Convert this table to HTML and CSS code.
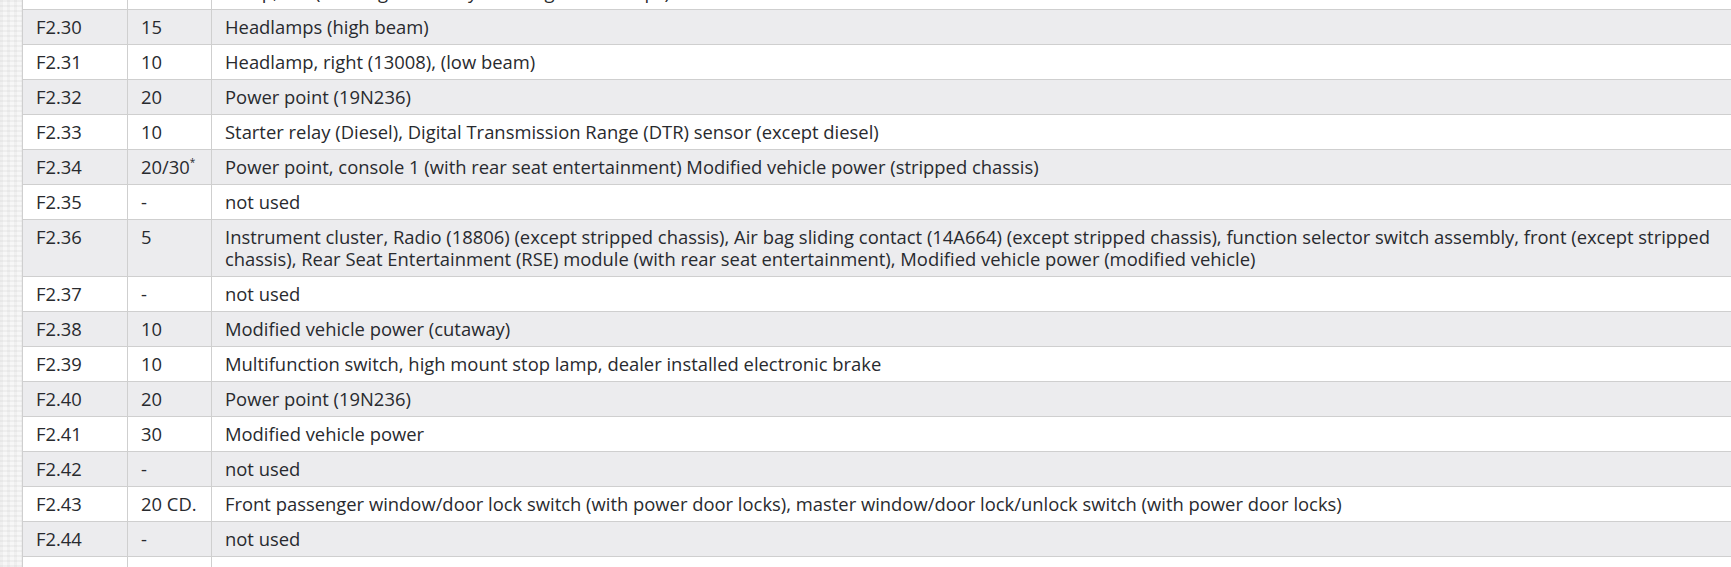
FILE: index.html
```html
<!DOCTYPE html>
<html>
<head>
<meta charset="utf-8">
<link rel="stylesheet" href="styles.css">
</head>
<body>
<div class="page">
  <div class="side"></div>
  <div class="content">
    <table class="fuses">
      <colgroup><col class="c1"><col class="c2"><col class="c3"></colgroup>
      <tbody>
        <tr><td>F2.29</td><td>10</td><td>Lamp, left (with high intensity discharge headlamps)</td></tr>
        <tr class="alt"><td>F2.30</td><td>15</td><td>Headlamps (high beam)</td></tr>
        <tr><td>F2.31</td><td>10</td><td>Headlamp, right (13008), (low beam)</td></tr>
        <tr class="alt"><td>F2.32</td><td>20</td><td>Power point (19N236)</td></tr>
        <tr><td>F2.33</td><td>10</td><td>Starter relay (Diesel), Digital Transmission Range (DTR) sensor (except diesel)</td></tr>
        <tr class="alt"><td>F2.34</td><td>20/30<sup>*</sup></td><td>Power point, console 1 (with rear seat entertainment) Modified vehicle power (stripped chassis)</td></tr>
        <tr><td>F2.35</td><td>-</td><td>not used</td></tr>
        <tr class="alt"><td>F2.36</td><td>5</td><td>Instrument cluster, Radio (18806) (except stripped chassis), Air bag sliding contact (14A664) (except stripped chassis), function selector switch assembly, front (except stripped chassis), Rear Seat Entertainment (RSE) module (with rear seat entertainment), Modified vehicle power (modified vehicle)</td></tr>
        <tr><td>F2.37</td><td>-</td><td>not used</td></tr>
        <tr class="alt"><td>F2.38</td><td>10</td><td>Modified vehicle power (cutaway)</td></tr>
        <tr><td>F2.39</td><td>10</td><td>Multifunction switch, high mount stop lamp, dealer installed electronic brake</td></tr>
        <tr class="alt"><td>F2.40</td><td>20</td><td>Power point (19N236)</td></tr>
        <tr><td>F2.41</td><td>30</td><td>Modified vehicle power</td></tr>
        <tr class="alt"><td>F2.42</td><td>-</td><td>not used</td></tr>
        <tr><td>F2.43</td><td>20 CD.</td><td>Front passenger window/door lock switch (with power door locks), master window/door lock/unlock switch (with power door locks)</td></tr>
        <tr class="alt"><td>F2.44</td><td>-</td><td>not used</td></tr>
        <tr><td>F2.45</td><td>-</td><td>not used</td></tr>
      </tbody>
    </table>
  </div>
</div>
</body>
</html>
```
FILE: styles.css
```css
html, body {
  margin: 0;
  padding: 0;
  background: #ffffff;
  overflow: hidden;
}
.page {
  display: flex;
  height: 567px;
  overflow: hidden;
}
.side {
  flex: 0 0 22px;
  background-color: #f7f7f7;
  background-image:
    repeating-linear-gradient(0deg, rgba(0,0,0,0.035) 0 2px, transparent 2px 5px),
    repeating-linear-gradient(90deg, rgba(0,0,0,0.03) 0 3px, transparent 3px 7px);
}
.content {
  flex: 1 1 auto;
  min-width: 0;
}
.fuses {
  margin-top: -26px;
  width: 100%;
  border-collapse: collapse;
  table-layout: fixed;
  font-family: "Open Sans", "Noto Sans", sans-serif;
  font-size: 18.4px;
  line-height: 22px;
  color: #282a2e;
}
.c1 { width: 105px; }
.c2 { width: 84px; }
.fuses td {
  padding: 6px 14px 6px 13px;
  border: 1px solid #cfcfcf;
  border-right: none;
  vertical-align: top;
  text-align: left;
}
.fuses tr.alt td {
  background: #ececee;
}
.fuses sup {
  font-size: 10px;
  line-height: 0;
  vertical-align: 8px;
}
```
